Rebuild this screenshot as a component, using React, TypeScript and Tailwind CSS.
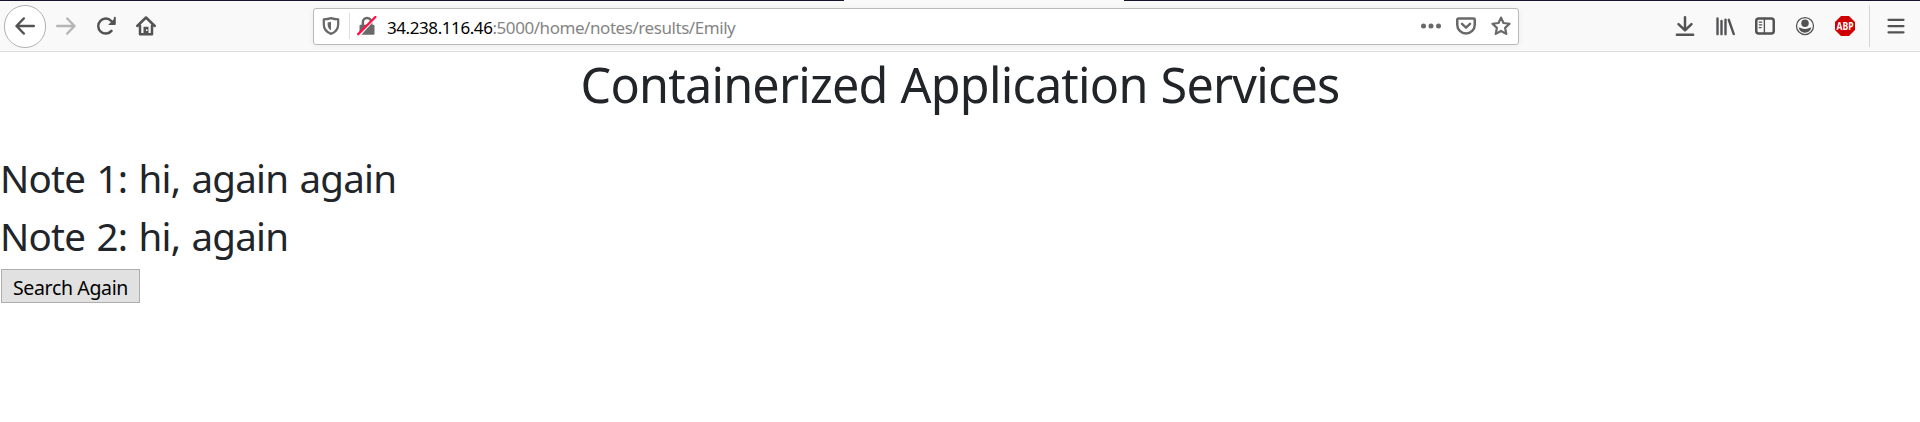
import type { ReactNode } from "react";

function Icon({ children, className = "" }: { children: ReactNode; className?: string }) {
  return (
    <svg viewBox="0 0 16 16" className={`h-5 w-5 shrink-0 ${className}`} fill="none" stroke="currentColor" strokeWidth="2" strokeLinecap="round" strokeLinejoin="round">
      {children}
    </svg>
  );
}

function NavButtons() {
  return (
    <div className="flex w-[313px] shrink-0 items-center pl-1">
      <button className="flex h-[43px] w-[42px] items-center justify-center rounded-full border border-[#b1b1b1] bg-white" aria-label="Back">
        <Icon><path d="M15 8H1.5M7 2 1.2 8 7 14" /></Icon>
      </button>
      <Icon className="ml-[10px] text-[#b6b6b7]"><path d="M1 8h13.5M9 2l5.8 6L9 14" /></Icon>
      <Icon className="ml-[20px]">
        <path d="M12.4 11.9A6 6 0 1 1 12.2 4" />
        <path d="M15.5 1.2v5.5a.4.4 0 0 1-.4.4H9.7z" fill="currentColor" stroke="none" />
        <path d="M15 1.2v5" strokeWidth="1.4" />
      </Icon>
      <Icon className="ml-[20px]">
        <path d="M1 8 8 1.2 15 8" />
        <path d="M3.2 7.5v7h9.6v-7" />
        <path d="M6 14V8.6h4V14z" fill="currentColor" stroke="none" />
        <circle cx="8.6" cy="11.3" r=".7" fill="white" stroke="none" />
      </Icon>
    </div>
  );
}

function AddressBar() {
  return (
    <div className="flex h-[37px] w-[1206px] shrink-0 items-center rounded-[3px] border border-[#b9b9ba] bg-white pl-[8px] text-[#696969] shadow-[0_1px_6px_rgba(0,0,0,0.06)]">
      <Icon className="h-[18px] w-[18px]">
        <path d="M8 1C6 1.700 4 2 1.600 2.100v4.400C1.600 10.800 4 13.600 8 15c4-1.400 6.400-4.200 6.400-8.500V2.100C12 2 10 1.700 8 1z" />
        <path d="M8 4.300v7.600C6 10.700 5 9 5 6.700V4.900z" fill="currentColor" stroke="none" />
      </Icon>
      <div className="ml-[9px] h-[26px] w-px bg-[#dededf]" />
      <Icon className="ml-[7px]">
        <path d="M4.700 7V4.800a3.300 3.300 0 0 1 6.600 0V7" />
        <rect x="2" y="7" width="12" height="8" rx="1" fill="currentColor" stroke="none" />
        <path d="M-.5 14.500 12.800-.2" stroke="white" strokeWidth="2" transform="translate(1.900 1.400)" />
        <path d="M1 14.500 14.700.8" stroke="#ff0f43" strokeWidth="1.900" />
      </Icon>
      <div className="ml-[10px] flex-1 whitespace-nowrap pt-[3px] font-['Noto_Sans',sans-serif] text-[17px] leading-6 tracking-[-0.440px] text-[#858585]">
        <span className="tracking-[-0.420px] text-black">34.238.116.46</span>:5000/home/notes/results/Emily
      </div>
      <Icon>
        <g fill="currentColor" stroke="none"><circle cx="2" cy="8" r="2" /><circle cx="8" cy="8" r="2" /><circle cx="14" cy="8" r="2" /></g>
      </Icon>
      <Icon className="ml-[15px]">
        <path d="M2 2h12a1 1 0 0 1 1 1v4A7 7 0 0 1 1 7V3a1 1 0 0 1 1-1z" />
        <path d="M4.800 6.300 8 9.300l3.200-3" />
      </Icon>
      <Icon className="ml-[15px] mr-[7px]">
        <path d="m8 1.300 2 4.300 4.800.6-3.500 3.300.9 4.800L8 12l-4.200 2.300.9-4.800L1.200 6.200 6 5.600z" strokeWidth="1.800" />
      </Icon>
    </div>
  );
}

function ToolbarActions() {
  return (
    <div className="ml-auto flex items-center pr-[14px]">
      <Icon><path d="M8 1v10M2.800 6.500 8 11.500l5.200-5M1.500 15h13" /></Icon>
      <Icon className="ml-[20px]">
        <path d="M2 2v12.500M5.200 4v10.500M8.400 3v11.500M11 3l4 11.500" strokeWidth="1.900" />
      </Icon>
      <Icon className="ml-[20px]">
        <rect x="1" y="2" width="14" height="12" rx="2" />
        <path d="M7.500 2v12" strokeWidth="1.100" />
        <path d="M3.400 4.800h2M3.400 7h2M3.400 9.200h1.500" strokeWidth="1" />
      </Icon>
      <Icon className="ml-[20px]">
        <circle cx="8" cy="8" r="6.800" strokeWidth="1" />
        <circle cx="8" cy="5.800" r="3" fill="currentColor" stroke="none" />
        <path d="M3 9.200C4.600 9.300 5.400 10.300 8 10.300s3.400-1 5-1.100C12.600 11.700 10.600 13.300 8 13.300S3.400 11.700 3 9.200z" fill="currentColor" stroke="none" />
      </Icon>
      <svg viewBox="0 0 20 20" className="ml-[20px] h-5 w-5 overflow-visible" role="img" aria-label="Adblock Plus">
        <path d="M6 0h8l6 6v8l-6 6H6l-6-6V6z" fill="#d10000" />
        <text x="10" y="13.800" textAnchor="middle" textLength="17" lengthAdjust="spacingAndGlyphs" className="fill-white font-['Open_Sans',sans-serif] text-[10px] font-bold">ABP</text>
      </svg>
      <div className="ml-[14px] h-[42px] w-px bg-[#d7d7db]" />
      <Icon className="ml-[16px]"><path d="M2 3h12M2 8h12M2 13h12" strokeWidth="1.800" /></Icon>
    </div>
  );
}

export default function App() {
  return (
    <div className="flex h-[422px] w-[1920px] flex-col overflow-hidden bg-white font-['Noto_Sans',sans-serif] text-[#212529]">
      <div className="flex h-px shrink-0 bg-[#15152b]">
        <div className="ml-[844px] w-[280px] bg-[#f9f9fa]" />
      </div>
      <header className="flex h-[51px] shrink-0 items-center border-b border-[#dededf] bg-[#f9f9fa] text-[#535354]">
        <NavButtons />
        <AddressBar />
        <ToolbarActions />
      </header>
      <main className="flex flex-col items-start">
        <h1 className="mt-[2px] self-center whitespace-nowrap text-[48.500px] leading-[60px] tracking-[-0.760px] [word-spacing:1px]">Containerized Application Services</h1>
        <h2 className="mt-[40px] whitespace-nowrap text-[38.500px] leading-[48px] tracking-[-0.760px] [word-spacing:2px]">Note 1: hi, again again</h2>
        <h2 className="mt-[10px] whitespace-nowrap text-[38.500px] leading-[48px] tracking-[-0.760px] [word-spacing:2px]">Note 2: hi, again</h2>
        <button className="ml-px mt-[9px] flex h-[34px] w-[139px] items-center justify-center whitespace-nowrap border border-[#adadad] bg-[#e1e1e1] pt-[4px] text-[19.500px] leading-6 tracking-[-0.350px] text-black">Search Again</button>
      </main>
    </div>
  );
}
